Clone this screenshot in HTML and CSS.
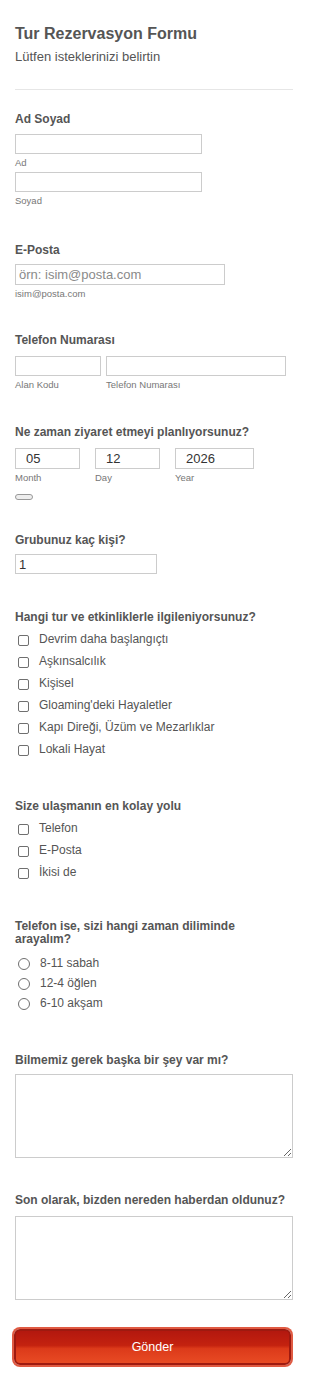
FILE: index.html
```html
<!DOCTYPE html>
<html lang="tr">
<head>
<meta charset="utf-8">
<link rel="stylesheet" href="styles.css">
</head>
<body>
<form class="form">
  <header class="head">
    <h1 class="title">Tur Rezervasyon Formu</h1>
    <p class="subtitle">Lütfen isteklerinizi belirtin</p>
  </header>
  <hr class="divider">

  <section class="field f-name">
    <div class="label">Ad Soyad</div>
    <div class="stack">
      <div class="sub-field"><input class="input w-name" type="text"><span class="sub">Ad</span></div>
      <div class="sub-field"><input class="input w-name" type="text"><span class="sub">Soyad</span></div>
    </div>
  </section>

  <section class="field f-email">
    <div class="label">E-Posta</div>
    <div class="sub-field"><input class="input w-email email" type="text" placeholder="örn: isim@posta.com"><span class="sub">isim@posta.com</span></div>
  </section>

  <section class="field f-phone">
    <div class="label">Telefon Numarası</div>
    <div class="row">
      <div class="sub-field"><input class="input w-area" type="text"><span class="sub">Alan Kodu</span></div>
      <div class="sub-field"><input class="input w-phone" type="text"><span class="sub">Telefon Numarası</span></div>
    </div>
  </section>

  <section class="field f-date">
    <div class="label">Ne zaman ziyaret etmeyi planlıyorsunuz?</div>
    <div class="row date-row">
      <div class="sub-field"><input class="input date w-month" type="text" value="05"><span class="sub">Month</span></div>
      <div class="sub-field"><input class="input date w-day" type="text" value="12"><span class="sub">Day</span></div>
      <div class="sub-field"><input class="input date w-year" type="text" value="2026"><span class="sub">Year</span></div>
    </div>
    <button class="pill" type="button"></button>
  </section>

  <section class="field f-group">
    <div class="label">Grubunuz kaç kişi?</div>
    <input class="input w-group value" type="text" value="1">
  </section>

  <section class="field f-tours">
    <div class="label">Hangi tur ve etkinliklerle ilgileniyorsunuz?</div>
    <ul class="options">
      <li class="opt"><span class="box"></span>Devrim daha başlangıçtı</li>
      <li class="opt"><span class="box"></span>Aşkınsalcılık</li>
      <li class="opt"><span class="box"></span>Kişisel</li>
      <li class="opt"><span class="box"></span>Gloaming'deki Hayaletler</li>
      <li class="opt"><span class="box"></span>Kapı Direği, Üzüm ve Mezarlıklar</li>
      <li class="opt"><span class="box"></span>Lokali Hayat</li>
    </ul>
  </section>

  <section class="field f-contact">
    <div class="label">Size ulaşmanın en kolay yolu</div>
    <ul class="options">
      <li class="opt"><span class="box"></span>Telefon</li>
      <li class="opt"><span class="box"></span>E-Posta</li>
      <li class="opt"><span class="box"></span>İkisi de</li>
    </ul>
  </section>

  <section class="field f-time">
    <div class="label label-wrap">Telefon ise, sizi hangi zaman diliminde arayalım?</div>
    <ul class="options radios">
      <li class="opt radio-opt"><span class="radio"></span>8-11 sabah</li>
      <li class="opt radio-opt"><span class="radio"></span>12-4 öğlen</li>
      <li class="opt radio-opt"><span class="radio"></span>6-10 akşam</li>
    </ul>
  </section>

  <section class="field f-other">
    <div class="label">Bilmemiz gerek başka bir şey var mı?</div>
    <textarea class="textarea"></textarea>
  </section>

  <section class="field f-source">
    <div class="label">Son olarak, bizden nereden haberdan oldunuz?</div>
    <textarea class="textarea"></textarea>
  </section>

  <div class="actions">
    <button class="submit" type="button">Gönder</button>
  </div>
</form>
</body>
</html>
```

FILE: styles.css
```css
* { box-sizing: border-box; }
html, body { margin: 0; padding: 0; background: #fff; }
body {
  font-family: "Liberation Sans", Arial, sans-serif;
  color: #555;
  width: 310px;
}
.form {
  display: flex;
  flex-direction: column;
  padding: 24px 17px 9px 15px;
}
.head { display: flex; flex-direction: column; gap: 6px; }
.title {
  margin: 0;
  font-size: 16px;
  line-height: 19px;
  font-weight: bold;
  color: #555;
}
.subtitle {
  margin: 0;
  font-size: 13px;
  line-height: 16px;
  color: #555;
}
.divider {
  margin: 24px 0 0;
  border: 0;
  height: 1px;
  background: #e6e6e6;
}
.field { display: flex; flex-direction: column; align-items: flex-start; }
.label {
  font-size: 12px;
  line-height: 16px;
  font-weight: bold;
  color: #555;
  margin-bottom: 7px;
}
.label-wrap { line-height: 13px; max-width: 250px; }
.f-name { margin-top: 21px; }
.f-email { margin-top: 35px; }
.f-phone { margin-top: 32px; }
.f-date { margin-top: 33px; }
.f-group { margin-top: 32px; }
.f-tours { margin-top: 35px; }
.f-contact { margin-top: 38px; }
.f-time { margin-top: 37px; }
.f-other { margin-top: 39px; }
.f-source { margin-top: 34px; }
.f-source .label { margin-bottom: 8px; }
.f-email .label, .f-group .label, .f-other .label { margin-bottom: 6px; }
.f-phone .label, .f-date .label { margin-bottom: 8px; }

.stack { display: flex; flex-direction: column; gap: 3px; }
.row { display: flex; gap: 5px; }
.date-row { gap: 15px; }
.sub-field { display: flex; flex-direction: column; gap: 2px; }
.sub {
  font-size: 9.5px;
  line-height: 13px;
  color: #777;
}
.input {
  display: block;
  height: 20px;
  border: 1px solid #ccc;
  border-radius: 0;
  background: #fff;
  padding: 0 3px;
  font-family: "Liberation Sans", Arial, sans-serif;
  font-size: 13px;
  color: #333;
  outline: none;
}
.input::placeholder { color: #8a8a8a; }
.email { height: 21px; }
.w-name { width: 187px; }
.w-email { width: 210px; }
.w-area { width: 86px; }
.w-phone { width: 180px; }
.w-month { width: 65px; }
.w-day { width: 65px; }
.w-year { width: 79px; }
.date { height: 21px; padding-left: 10px; color: #333; }
.w-group { width: 142px; }
.value { color: #333; }
.pill {
  margin-top: 10px;
  width: 18px;
  height: 6px;
  padding: 0;
  border: 1px solid #999;
  border-radius: 3px;
  background: #eee;
}
.options {
  list-style: none;
  margin: 0;
  padding: 0;
  display: flex;
  flex-direction: column;
  margin-top: -4px;
}
.opt {
  display: flex;
  align-items: center;
  height: 22px;
  padding-left: 3px;
  gap: 10px;
  font-size: 12px;
  color: #555;
}
.box {
  width: 11px;
  height: 11px;
  border: 1px solid #6f6f6f;
  border-radius: 2px;
  background: #fff;
  flex: none;
  margin-top: 3px;
}
.radios { margin-top: 0; }
.radio-opt { height: 20px; }
.radio {
  width: 12px;
  height: 12px;
  border: 1px solid #6f6f6f;
  border-radius: 50%;
  background: #fff;
  flex: none;
  margin-top: 2px;
}
.textarea {
  display: block;
  width: 278px;
  height: 84px;
  border: 1px solid #ccc;
  border-radius: 0;
  margin: 0;
  padding: 2px;
  font-family: "Liberation Sans", Arial, sans-serif;
}
.actions { margin-top: 29px; padding: 0 2px 0 0; display: flex; }
.submit {
  width: 279px;
  height: 36px;
  margin-left: -1px;
  border: 2px solid #9e1a10;
  border-radius: 6px;
  box-shadow: 0 0 0 2px #e05a42;
  background: linear-gradient(#b3180f 0%, #c4220f 45%, #dc3a1a 55%, #e84b24 100%);
  color: #fff;
  font-family: "Liberation Sans", Arial, sans-serif;
  font-size: 12.5px;
  cursor: pointer;
}
```
